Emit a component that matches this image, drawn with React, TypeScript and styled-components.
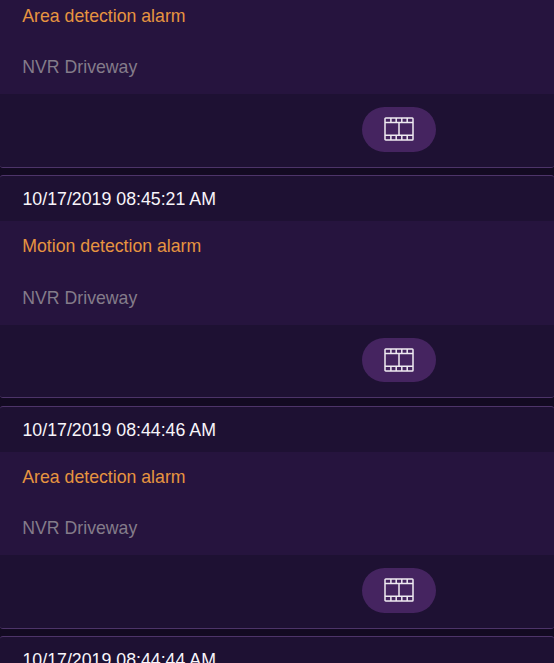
import React from "react";
import styled, { createGlobalStyle } from "styled-components";

const GlobalStyle = createGlobalStyle`
  * { box-sizing: border-box; }
  body { margin: 0; background: #130a22; overflow: hidden; }
`;

const Viewport = styled.main`
  width: 554px;
  height: 663px;
  overflow: hidden;
  background: #130a22;
  font-family: "Liberation Sans", Arial, sans-serif;
  font-size: 17.7px;
`;

const AlarmList = styled.div`
  display: flex;
  flex-direction: column;
  gap: 7.5px;
  margin-top: -55.2px;
`;

const Card = styled.article`
  flex: none;
  height: 223px;
  display: flex;
  flex-direction: column;
  border: solid #4d3469;
  border-width: 1px 0;
  border-radius: 3px;
  background: #1e1133;
  overflow: hidden;
`;

const CardHeader = styled.header`
  height: 45px;
  padding-left: 22.5px;
  line-height: 46.6px;
  font-size: 17.76px;
  color: #f8f5fa;
`;

const CardBody = styled.div`
  height: 103.5px;
  background: #26143e;
  padding-left: 22.3px;
`;

const Line = styled.div<{ $tone: string }>`
  height: 51.4px;
  line-height: 50px;
  color: ${({ $tone }) => $tone};
`;

const CardFooter = styled.footer`
  flex: 1;
  display: flex;
  align-items: flex-start;
  padding: 12.9px 0 0 362px;
`;

const PlaybackButton = styled.button`
  display: grid;
  place-items: center;
  width: 74px;
  height: 44.5px;
  padding: 0;
  border: 0;
  border-radius: 23px;
  background: #452460;
  color: #efeaf1;
`;

const FilmIcon = () => (
  <svg width="30" height="24" viewBox="0 0 30 24" fill="none" stroke="currentColor" strokeWidth="1.5">
    <rect x="1" y="1" width="28" height="22" rx="0.8" />
    <path d="M1 5.5H29M1 18.2H29M15 5.5V18.2" />
    <path d="M6.9 1V5.5M12.2 1V5.5M17.8 1V5.5M23.2 1V5.5M6.9 18.2V23M12.2 18.2V23M17.8 18.2V23M23.2 18.2V23" />
  </svg>
);

const alarms = [
  { time: "10/17/2019 08:45:25 AM", kind: "Area detection alarm" },
  { time: "10/17/2019 08:45:21 AM", kind: "Motion detection alarm" },
  { time: "10/17/2019 08:44:46 AM", kind: "Area detection alarm" },
  { time: "10/17/2019 08:44:44 AM", kind: "Motion detection alarm" },
];

export default function App() {
  return (
    <Viewport>
      <GlobalStyle />
      <AlarmList>
        {alarms.map((alarm) => (
          <Card key={alarm.time}>
            <CardHeader>{alarm.time}</CardHeader>
            <CardBody>
              <Line $tone="#e79440">{alarm.kind}</Line>
              <Line $tone="#847c8a">NVR Driveway</Line>
            </CardBody>
            <CardFooter>
              <PlaybackButton aria-label="Play recording">
                <FilmIcon />
              </PlaybackButton>
            </CardFooter>
          </Card>
        ))}
      </AlarmList>
    </Viewport>
  );
}
